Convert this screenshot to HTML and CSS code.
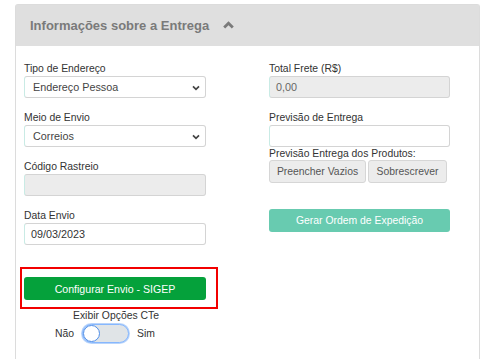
FILE: index.html
```html
<!DOCTYPE html>
<html lang="pt-BR">
<head>
<meta charset="utf-8">
<title>Informações sobre a Entrega</title>
<link rel="stylesheet" href="styles.css">
</head>
<body>
<div class="panel">
  <div class="panel-heading">
    <span class="panel-title">Informações sobre a Entrega</span>
    <svg class="chev-up" width="11" height="8" viewBox="0 0 11 8"><path d="M1.2 6.6 L5.5 2.3 L9.8 6.6" fill="none" stroke="#7a7a7a" stroke-width="2.8"/></svg>
  </div>
  <div class="panel-body">
    <div class="col">
      <div class="group">
        <label class="lbl">Tipo de Endereço</label>
        <div class="field select">Endereço Pessoa<svg class="caret" width="8" height="6" viewBox="0 0 8 6"><path d="M1 1.3 L4 4.3 L7 1.3" fill="none" stroke="#444" stroke-width="1.7"/></svg></div>
      </div>
      <div class="group">
        <label class="lbl">Meio de Envio</label>
        <div class="field select">Correios<svg class="caret" width="8" height="6" viewBox="0 0 8 6"><path d="M1 1.3 L4 4.3 L7 1.3" fill="none" stroke="#444" stroke-width="1.7"/></svg></div>
      </div>
      <div class="group">
        <label class="lbl">Código Rastreio</label>
        <div class="field disabled"></div>
      </div>
      <div class="group">
        <label class="lbl">Data Envio</label>
        <div class="field date">09/03/2023</div>
      </div>
      <div class="highlight">
        <button class="btn-green">Configurar Envio - SIGEP</button>
      </div>
      <div class="cte-title">Exibir Opções CTe</div>
      <div class="toggle-row">
        <span>Não</span>
        <span class="switch"><span class="knob"></span></span>
        <span>Sim</span>
      </div>
    </div>
    <div class="col">
      <div class="group">
        <label class="lbl">Total Frete (R$)</label>
        <div class="field disabled value">0,00</div>
      </div>
      <div class="group tight">
        <label class="lbl">Previsão de Entrega</label>
        <div class="field"></div>
      </div>
      <div class="lbl">Previsão Entrega dos Produtos:</div>
      <div class="btn-row">
        <button class="btn-grey w1">Preencher Vazios</button>
        <button class="btn-grey w2">Sobrescrever</button>
      </div>
      <button class="btn-teal">Gerar Ordem de Expedição</button>
    </div>
  </div>
</div>
</body>
</html>
```
FILE: styles.css
```css
html, body {
  margin: 0;
  padding: 0;
  background: #fff;
  font-family: "Liberation Sans", Arial, sans-serif;
}
.panel {
  margin: 4px 0 0 15px;
  width: 463px;
  height: 400px;
  border: 1px solid #dcdcdc;
  border-bottom: none;
  border-radius: 3px 3px 0 0;
}
.panel-heading {
  height: 41px;
  background: #dfdfdf;
  display: flex;
  align-items: center;
  padding-left: 14px;
  box-sizing: border-box;
}
.panel-title {
  font-size: 13px;
  font-weight: bold;
  color: #7a7a7a;
}
.chev-up {
  margin-left: 14px;
  margin-top: -1px;
}
.panel-body {
  display: grid;
  grid-template-columns: 182px 181px;
  column-gap: 63px;
  padding: 16px 0 0 8px;
}
.col {
  display: flex;
  flex-direction: column;
}
.lbl {
  display: block;
  font-size: 10.4px;
  line-height: 14px;
  color: #333;
}
.group {
  margin-bottom: 13px;
}
.group.tight {
  margin-bottom: 0;
}
.field {
  box-sizing: border-box;
  height: 22px;
  border: 1px solid #d4d4d4;
  border-left-color: #c9ebe5;
  border-radius: 3px;
  background: #fff;
  font-size: 10.8px;
  line-height: 20px;
  color: #444;
  position: relative;
}
.select {
  padding-left: 8px;
}
.caret {
  position: absolute;
  right: 5px;
  top: 8px;
}
.disabled {
  background: #ececec;
}
.value {
  padding-left: 6px;
  color: #666;
}
.date {
  padding-left: 6px;
  color: #333;
}
.highlight {
  margin-top: 9px;
  margin-left: -4px;
  width: 188px;
  border: 2px solid #f20000;
  padding: 8px 4px 7px 2px;
}
.btn-green {
  display: block;
  width: 182px;
  height: 23px;
  border: none;
  border-radius: 3px;
  background: #05a13b;
  color: #fff;
  font-family: "Liberation Sans", Arial, sans-serif;
  font-size: 10.6px;
  padding: 0;
}
.cte-title {
  font-size: 10.4px;
  line-height: 14px;
  color: #333;
  text-align: center;
  width: 192px;
  margin-left: -4px;
}
.toggle-row {
  display: flex;
  align-items: center;
  gap: 8px;
  margin-left: 31px;
  height: 20px;
  font-size: 10.4px;
  color: #333;
}
.switch {
  position: relative;
  box-sizing: border-box;
  width: 47px;
  height: 19px;
  border-radius: 10px;
  background: #e0e4e7;
  border: 1px solid #86b7fe;
  box-shadow: 0 0 0 1px #b8d4fb;
}
.knob {
  position: absolute;
  left: 0;
  top: 0;
  box-sizing: border-box;
  width: 17px;
  height: 17px;
  border-radius: 50%;
  background: #fff;
  border: 1.5px solid #4f8fea;
}
.btn-row {
  display: flex;
  gap: 2px;
  margin-top: -1px;
}
.btn-grey {
  height: 23px;
  box-sizing: border-box;
  border: 1px solid #d6d6d6;
  border-radius: 3px;
  background: #ececec;
  color: #555;
  font-family: "Liberation Sans", Arial, sans-serif;
  font-size: 10.4px;
  padding: 0;
}
.w1 { width: 97px; }
.w2 { width: 79px; }
.btn-teal {
  margin-top: 26px;
  width: 181px;
  height: 23px;
  border: none;
  border-radius: 3px;
  background: #68cbb0;
  color: #fff;
  font-family: "Liberation Sans", Arial, sans-serif;
  font-size: 10.4px;
  padding: 0;
}
```
